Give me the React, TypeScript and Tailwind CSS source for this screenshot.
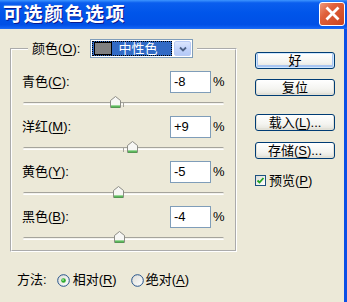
import React from "react";

const FONT = "font-['Liberation_Sans','Noto_Sans_CJK_SC',sans-serif]";

function U({ c }: { c: string }) {
  return <span className="underline underline-offset-[2px] decoration-1">{c}</span>;
}

function Thumb() {
  return (
    <svg width="11" height="12" viewBox="0 0 11 12">
      <path d="M0.5 4.5 L5.5 0.5 L10.5 4.5 L10.5 11.5 L0.5 11.5 Z" fill="#F7F7F4" stroke="#8C8D86" />
      <path d="M1 10 H10" stroke="#3CB13C" strokeWidth="1" />
      <path d="M1 11 H10" stroke="#21A121" strokeWidth="1" />
    </svg>
  );
}

function Slider({ value }: { value: number }) {
  return (
    <div className="relative h-[23px] pt-[9px] ml-[1px]">
      <div className="relative h-[3px] rounded-full border-t border-[#A5A49C] bg-[#F3F2EC] border-b border-b-white">
        <div className="absolute left-[100px] top-[-1px] w-[1px] h-[5px] bg-[#A5A49C]" />
      </div>
      <div className="absolute top-[3px] leading-none" style={{ left: `${94.5 + value}px` }}>
        <Thumb />
      </div>
    </div>
  );
}

function Row({ label, k, value, last }: { label: string; k: string; value: string; last?: boolean }) {
  const v = parseInt(value, 10);
  return (
    <div>
      <div className="flex items-center h-[22px]">
        <div className="flex-1 text-[13px] text-black">
          {label}(<U c={k} />):
        </div>
        <div className="w-[41px] h-[22px] border border-[#7F9DB9] bg-white pl-[3px] flex items-center text-[13px] text-black">
          {value}
        </div>
        <div className="w-[13px] pl-[2px] text-[13px] text-black">%</div>
      </div>
      <div className={last ? "h-[22px]" : ""}>
        <Slider value={v} />
      </div>
    </div>
  );
}

function XPButton({ children, def }: { children: React.ReactNode; def?: boolean }) {
  return (
    <div
      className={
        "w-[80px] h-[17px] rounded-[3px] border border-[#003C74] bg-[linear-gradient(to_bottom,#FFFFFF_0%,#F4F4F0_60%,#E3E2DA_100%)] flex items-center justify-center text-[13px] text-black leading-none " +
        (def ? "shadow-[inset_0_0_0_1px_#CEE7FF,inset_0_-1px_0_2px_#A9C5F1]" : "shadow-[inset_0_-1px_0_1px_#E2E1D8]")
      }
    >
      {children}
    </div>
  );
}

function Radio({ on }: { on?: boolean }) {
  return (
    <svg width="13" height="13" viewBox="0 0 13 13">
      <defs>
        <linearGradient id="rg" x1="0" y1="0" x2="1" y2="1">
          <stop offset="0" stopColor="#DCDCD6" />
          <stop offset="1" stopColor="#FFFFFF" />
        </linearGradient>
      </defs>
      <circle cx="6.5" cy="6.5" r="5.8" fill="url(#rg)" stroke="#24528A" strokeWidth="1" />
      {on && <circle cx="6.5" cy="6.5" r="2.3" fill="#2CAA2C" />}
      {on && <circle cx="6" cy="6" r="1" fill="#8EE08E" />}
    </svg>
  );
}

export default function App() {
  return (
    <div className={"w-[347px] h-[302px] bg-[#ECE9D8] flex flex-col overflow-hidden " + FONT}>
      {/* Title bar */}
      <div className="h-[29px] shrink-0 flex items-center justify-between pl-[3px] pr-[2px] bg-[linear-gradient(to_bottom,#3D95FF_0%,#0A5EEE_10%,#0055EA_45%,#0050E6_85%,#0A5CF0_93%,#1F6CF5_100%)]">
        <div className="text-white text-[19px] font-bold tracking-[1.5px] leading-none [text-shadow:1px_1px_0_#0A1A90]">
          可选颜色选项
        </div>
        <div className="w-[26px] h-[24px] mb-[2px] rounded-[3px] border border-white bg-[linear-gradient(135deg,#EE9A7C_0%,#E0603A_35%,#C9441F_100%)] flex items-center justify-center">
          <svg width="15" height="15" viewBox="0 0 15 15">
            <path d="M2.5 2.5 L12.5 12.5 M12.5 2.5 L2.5 12.5" stroke="white" strokeWidth="2.8" strokeLinecap="square" />
          </svg>
        </div>
      </div>

      {/* Body */}
      <div className="flex-1 flex border-r-[3px] border-[#0B4FE6]">
        {/* Left column */}
        <div className="pl-[10px] pt-[10px]">
          <fieldset className="w-[227px] border-2 border-white [border-style:groove] pl-[10px] pr-[11px] pt-[13px] pb-0">
            <legend className="ml-[6px] px-[4px]">
              <div className="flex items-center h-[19px]">
                <span className="text-[13px] text-black">
                  颜色(<U c="O" />):
                </span>
                <div className="ml-[10px] w-[103px] h-[19px] border border-[#7F9DB9] bg-white flex items-center p-[1px]">
                  <div className="flex-1 h-full bg-[#316AC5] outline-1 outline-dotted outline-[#000] -outline-offset-1 flex items-center pl-[2px]">
                    <div className="w-[18px] h-[13px] bg-[#808080] border border-black" />
                    <span className="ml-[6px] text-[13px] text-white leading-none">中性色</span>
                  </div>
                  <div className="ml-[2px] w-[17px] h-full rounded-[2px] border border-[#B9CBF5] bg-[linear-gradient(to_bottom,#DCE6FD_0%,#C3D4FB_50%,#B5CAF7_100%)] flex items-center justify-center">
                    <svg width="8" height="6" viewBox="0 0 8 6">
                      <path d="M1 1.5 L4 4.5 L7 1.5" fill="none" stroke="#4D6185" strokeWidth="1.8" />
                    </svg>
                  </div>
                </div>
              </div>
            </legend>
            <Row label="青色" k="C" value="-8" />
            <Row label="洋红" k="M" value="+9" />
            <Row label="黄色" k="Y" value="-5" />
            <Row label="黑色" k="B" value="-4" last />
          </fieldset>

          <div className="mt-[20px] pl-[7px] h-[16px] flex items-center text-[13px] text-black">
            <span>方法:</span>
            <span className="ml-[10px] flex items-center">
              <Radio on />
            </span>
            <span className="ml-[3px]">
              相对(<U c="R" />)
            </span>
            <span className="ml-[14px] flex items-center">
              <Radio />
            </span>
            <span className="ml-[2px]">
              绝对(<U c="A" />)
            </span>
          </div>
        </div>

        {/* Right column */}
        <div className="ml-[18px] pt-[23px] flex flex-col">
          <XPButton def>好</XPButton>
          <div className="mt-[10px]">
            <XPButton>复位</XPButton>
          </div>
          <div className="mt-[18px]">
            <XPButton>
              载入(<U c="L" />)...
            </XPButton>
          </div>
          <div className="mt-[11px]">
            <XPButton>
              存储(<U c="S" />)...
            </XPButton>
          </div>
          <div className="mt-[16px] flex items-center h-[11px]">
            <div className="w-[11px] h-[11px] border border-[#1C5180] bg-[linear-gradient(135deg,#DCDCD7_0%,#FFFFFF_100%)] flex items-center justify-center">
              <svg width="9" height="9" viewBox="0 0 9 9">
                <path d="M1.5 4.5 L3.5 6.5 L7.5 2" fill="none" stroke="#21A121" strokeWidth="1.8" />
              </svg>
            </div>
            <span className="ml-[3px] text-[13px] text-black">
              预览(<U c="P" />)
            </span>
          </div>
        </div>
      </div>
    </div>
  );
}
